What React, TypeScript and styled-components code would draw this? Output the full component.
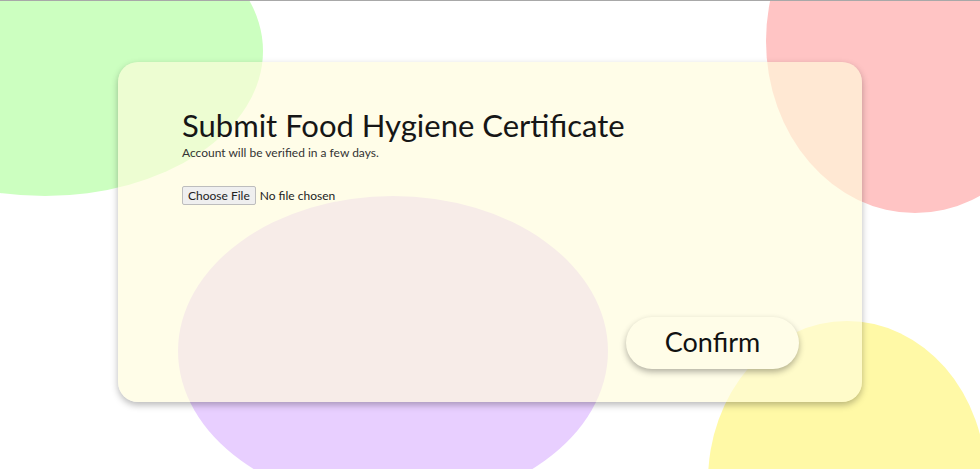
import React from 'react'
import styled, { createGlobalStyle } from 'styled-components'

const GlobalStyle = createGlobalStyle`
  html, body {
    margin: 0;
    padding: 0;
    background: #fff;
  }
  body {
    font-family: 'Lato', 'Open Sans', sans-serif;
    color: #1a1a1a;
  }
`

const Page = styled.div`
  position: relative;
  height: 469px;
  box-sizing: border-box;
  border-top: 1px solid #a8a8a8;
  overflow: hidden;
  display: flex;
  justify-content: center;
  padding-top: 61px;
`

// background bubbles, each one is a free-floating shape
const Blob = styled.div<{ $x: number; $y: number; $w: number; $h: number; $color: string }>`
  position: absolute;
  left: ${(p) => p.$x}px;
  top: ${(p) => p.$y}px;
  width: ${(p) => p.$w}px;
  height: ${(p) => p.$h}px;
  border-radius: 50%;
  background: ${(p) => p.$color};
`

const Card = styled.div`
  position: relative;
  z-index: 1;
  width: 744px;
  height: 340px;
  box-sizing: border-box;
  padding: 43px 63px 33px 64px;
  border-radius: 20px;
  background: rgba(255, 252, 220, 0.65);
  box-shadow: 0 3px 7px rgba(0, 0, 0, 0.28);
  display: flex;
  flex-direction: column;
`

const Title = styled.h1`
  margin: 0;
  font-size: 31px;
  font-weight: 400;
  line-height: 40px;
  color: #161616;
`

const Subtitle = styled.p`
  margin: 0;
  font-size: 12px;
  line-height: 16px;
  color: #333;
`

const FileInput = styled.input`
  margin-top: 25px;
  font-family: 'Lato', sans-serif;
  font-size: 12px;
  color: #222;
  align-self: flex-start;

  &::file-selector-button {
    font-family: 'Lato', sans-serif;
    font-size: 12px;
    color: #222;
    height: 19px;
    padding: 0 5px;
    margin-right: 4px;
    border: 1px solid #bdbdbd;
    border-radius: 2px;
    background: #efefef;
  }
`

const Footer = styled.div`
  margin-top: auto;
  display: flex;
  justify-content: flex-end;
`

const ConfirmButton = styled.button`
  width: 173px;
  height: 52px;
  border: none;
  border-radius: 26px;
  background: #fffde8;
  box-shadow: 0 3px 6px rgba(0, 0, 0, 0.3);
  font-family: 'Lato', sans-serif;
  font-size: 27px;
  line-height: 1;
  padding: 0 0 3px;
  color: #111;
  cursor: pointer;
`

const blobs = [
  { x: -173, y: -95, w: 436, h: 290, color: '#ccffc0' },
  { x: 766, y: -132, w: 298, h: 344, color: '#ffc4c4' },
  { x: 178, y: 195, w: 430, h: 310, color: '#e8cfff' },
  { x: 708, y: 320, w: 278, h: 320, color: '#fff9a6' },
]

const App: React.FC = () => {
  return (
    <>
      <GlobalStyle />
      <Page>
        {blobs.map((b, i) => (
          <Blob key={i} $x={b.x} $y={b.y} $w={b.w} $h={b.h} $color={b.color} />
        ))}
        <Card>
          <Title>Submit Food Hygiene Certificate</Title>
          <Subtitle>Account will be verified in a few days.</Subtitle>
          <FileInput type="file" />
          <Footer>
            <ConfirmButton>Confirm</ConfirmButton>
          </Footer>
        </Card>
      </Page>
    </>
  )
}

export default App
